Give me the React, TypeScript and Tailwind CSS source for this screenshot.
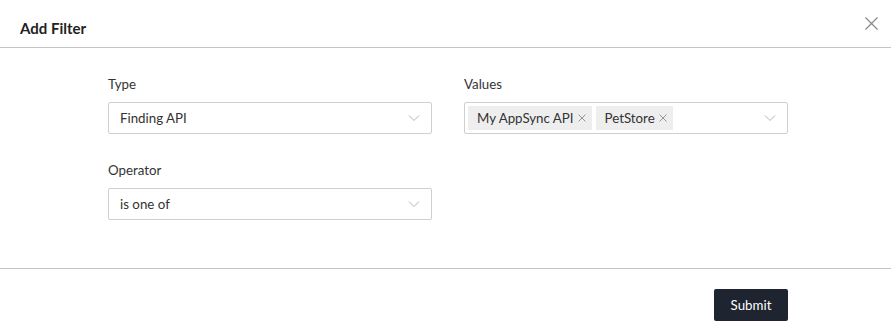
import React from "react";

function Chevron() {
  return (
    <svg width="12" height="8" viewBox="0 0 12 8" className="shrink-0">
      <path d="M1 1.5 L6 6.5 L11 1.5" fill="none" stroke="#b5b5b5" strokeWidth="1" />
    </svg>
  );
}

function SmallX() {
  return (
    <svg width="8" height="8" viewBox="0 0 8 8" className="shrink-0">
      <path d="M0.5 0.5 L7.5 7.5 M7.5 0.5 L0.5 7.5" fill="none" stroke="#8a8a8a" strokeWidth="0.9" />
    </svg>
  );
}

function Select({ value }: { value: string }) {
  return (
    <div className="flex h-[32px] items-center justify-between border border-[#cfcfcf] rounded-[2px] pl-[11px] pr-[11px] text-[13.3px] text-[#333]">
      <span className="pt-[2px]">{value}</span>
      <Chevron />
    </div>
  );
}

function Tag({ label }: { label: string }) {
  return (
    <div className="flex h-[24px] items-center gap-[4px] bg-[#eeeeee] pl-[9px] pr-[6px] text-[13.3px] text-[#333]">
      <span className="pt-[2px]">{label}</span>
      <SmallX />
    </div>
  );
}

export default function App() {
  return (
    <div
      className="w-[891px] h-[336px] bg-white flex flex-col"
      style={{ fontFamily: 'Lato, "Noto Sans", sans-serif' }}
    >
      <div className="flex h-[48px] items-center justify-between border-b border-[#c4c4c4] pl-[20px] pr-[13px]">
        <span className="mt-[9px] text-[15px] font-bold text-[#222]">Add Filter</span>
        <svg width="13" height="13" viewBox="0 0 13 13" className="mb-[1px]">
          <path d="M0.5 0.5 L12.5 12.5 M12.5 0.5 L0.5 12.5" fill="none" stroke="#888" strokeWidth="1.2" />
        </svg>
      </div>
      <div className="flex h-[221px] gap-[32px] border-b border-[#c4c4c4] pl-[108px] pt-[26px]">
        <div className="flex w-[324px] flex-col">
          <label className="text-[13.3px] text-[#333] leading-[20px]">Type</label>
          <div className="mt-[8px]">
            <Select value="Finding API" />
          </div>
          <label className="mt-[26px] text-[13.3px] text-[#333] leading-[20px]">Operator</label>
          <div className="mt-[8px]">
            <Select value="is one of" />
          </div>
        </div>
        <div className="flex w-[324px] flex-col">
          <label className="text-[13.3px] text-[#333] leading-[20px]">Values</label>
          <div className="mt-[8px] flex h-[32px] items-center justify-between border border-[#cfcfcf] rounded-[2px] pl-[3px] pr-[11px]">
            <div className="flex gap-[4px]">
              <Tag label="My AppSync API" />
              <Tag label="PetStore" />
            </div>
            <Chevron />
          </div>
        </div>
      </div>
      <div className="flex flex-1 items-start justify-end pr-[103px] pt-[20px]">
        <button className="h-[32px] w-[74px] rounded-[2px] bg-[#1e2430] text-[13.3px] text-white">
          <span className="inline-block pt-[1px]">Submit</span>
        </button>
      </div>
    </div>
  );
}
